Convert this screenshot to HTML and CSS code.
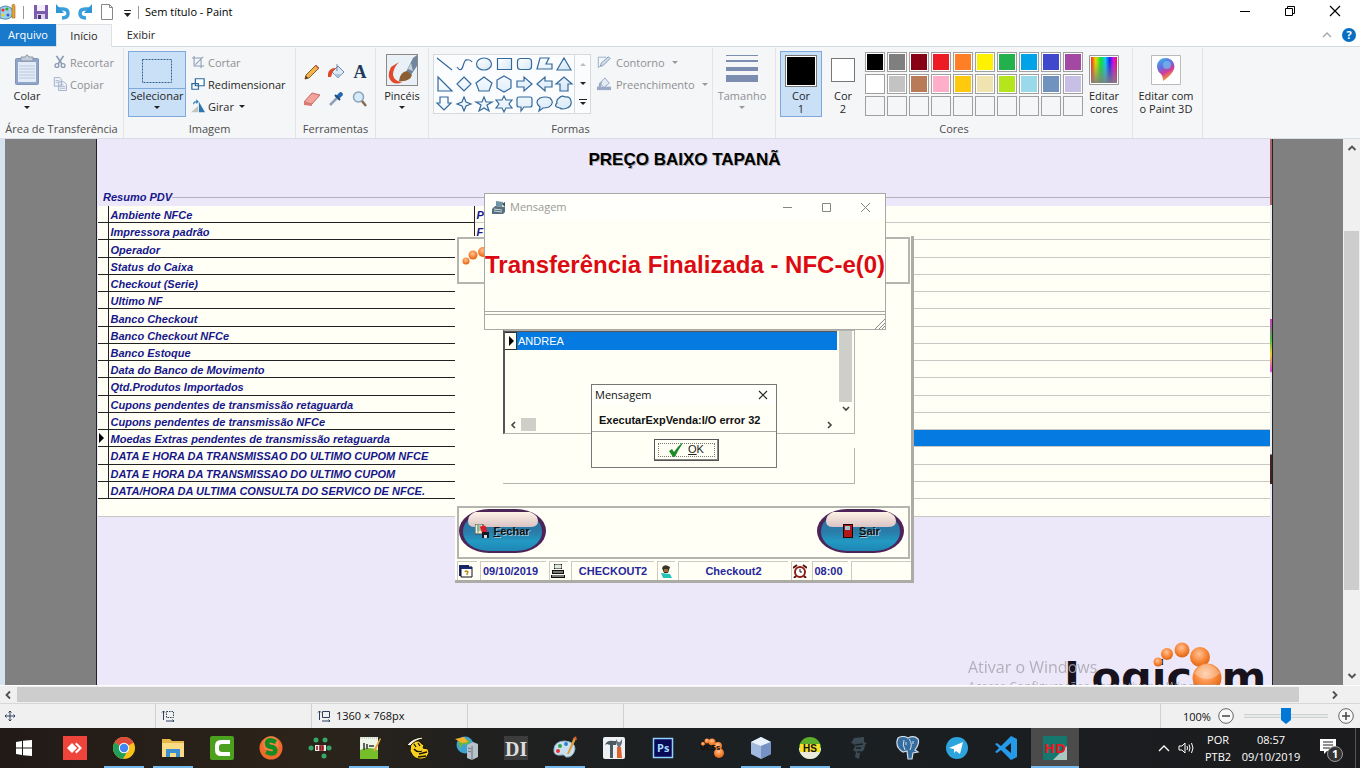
FILE: index.html
```html
<!DOCTYPE html>
<html lang="pt-BR">
<head>
<meta charset="utf-8">
<title>Sem título - Paint</title>
<link rel="stylesheet" href="styles.css">
</head>
<body>
<svg class="defs" aria-hidden="true">
  <defs>
    <radialGradient id="ball" cx=".45" cy=".35" r=".65"><stop offset="0" stop-color="#ffc49a"/><stop offset=".55" stop-color="#f98a3c"/><stop offset="1" stop-color="#dd6414"/></radialGradient>
    <linearGradient id="rainbow"><stop offset="0" stop-color="#f22"/><stop offset=".18" stop-color="#dd0"/><stop offset=".38" stop-color="#1d3"/><stop offset=".55" stop-color="#1ce"/><stop offset=".72" stop-color="#22e"/><stop offset=".88" stop-color="#d1d"/><stop offset="1" stop-color="#e14"/></linearGradient>
    <linearGradient id="fade" x2="0" y2="1"><stop offset=".2" stop-color="#808080" stop-opacity="0"/><stop offset="1" stop-color="#808080" stop-opacity=".9"/></linearGradient>
    <linearGradient id="pin" x2=".4" y2="1"><stop offset="0" stop-color="#37b7ea"/><stop offset=".45" stop-color="#6a6be0"/><stop offset=".7" stop-color="#d13a9a"/><stop offset="1" stop-color="#f8a02a"/></linearGradient>
    <linearGradient id="pill" x2="0" y2="1"><stop offset="0" stop-color="#2b6f9c"/><stop offset=".5" stop-color="#2a7ba8"/><stop offset=".75" stop-color="#2299c2"/><stop offset="1" stop-color="#1f86b5"/></linearGradient>
    <linearGradient id="gloss" x2="0" y2="1"><stop offset="0" stop-color="#fff2e6"/><stop offset="1" stop-color="#d9c3c4"/></linearGradient>
    <linearGradient id="shape" x2="1" y2="1"><stop offset="0" stop-color="#fff"/><stop offset="1" stop-color="#d5e8f8"/></linearGradient>
  </defs>
</svg>
<div class="app">
  <header class="titlebar">
    <svg class="logo" viewBox="0 0 17 18"><path d="M0 5q6-4 11 0 3 3 1 8-4 5-12 2z" fill="#9fd0ec" stroke="#4b8db5"/><circle cx="3" cy="7" r="1.6" fill="#e33"/><circle cx="7" cy="6" r="1.6" fill="#3a3"/><circle cx="3" cy="12" r="1.6" fill="#ec2"/><circle cx="8" cy="12" r="1.6" fill="#36c"/><path d="M12 15V2l2-1 1 2v12z" fill="#e9a13a" stroke="#a86a1c" stroke-width=".6"/></svg>
    <span class="bar"></span>
    <button class="quick" aria-label="Salvar"><svg viewBox="0 0 16 16"><path d="M1 1h14v14H1z" fill="#7d5bb0"/><path d="M4 1h8v6H4z" fill="#f2eefa"/><path d="M4 10h8v5H4z" fill="#d9d3e4"/><path d="M5 11h3v4H5z" fill="#4a3570"/></svg></button>
    <button class="quick" aria-label="Desfazer"><svg viewBox="0 0 16 16"><path d="M4 5h4q5 0 5 4.500T7 14" fill="none" stroke="#3aa0dd" stroke-width="3.500"/><path d="M1 0v9h8z" fill="#2f96d8"/></svg></button>
    <button class="quick" aria-label="Refazer"><svg viewBox="0 0 16 16"><path d="M12 5H8Q3 5 3 9.500T9 14" fill="none" stroke="#3aa0dd" stroke-width="3.500"/><path d="M15 0v9H7z" fill="#2f96d8"/></svg></button>
    <button class="quick" aria-label="Novo"><svg viewBox="0 0 16 16"><path d="M2.500.5h8l3 3v12h-11zM10.500.5v3h3" fill="#fff" stroke="#888"/></svg></button>
    <button class="quick" aria-label="Personalizar"><svg viewBox="0 0 16 16"><path d="M5 6h7v1H5zM5 9h7l-3.500 4z" fill="#222"/></svg></button>
    <span class="bar"></span>
    <h1 class="caption">Sem título - Paint</h1>
    <div class="winbtns">
      <button aria-label="Minimizar"><svg viewBox="0 0 12 12"><path d="M1 6.500h10" stroke="#000"/></svg></button>
      <button aria-label="Restaurar"><svg viewBox="0 0 12 12"><path d="M1.500 3.500h7v7h-7zM3.500 3.500v-2h7v7h-2" fill="none" stroke="#000"/></svg></button>
      <button aria-label="Fechar"><svg viewBox="0 0 12 12"><path d="M1 1l10 10M11 1L1 11" stroke="#000" stroke-width="1.200"/></svg></button>
    </div>
  </header>
  <nav class="tabs">
    <button class="tab file">Arquivo</button>
    <button class="tab current">Início</button>
    <button class="tab">Exibir</button>
    <div class="help">
      <svg width="10" height="8" viewBox="0 0 10 8"><path d="M1 6l4-4 4 4" fill="none" stroke="#aaa" stroke-width="1.500"/></svg>
      <button class="helpbtn" aria-label="Ajuda">?</button>
    </div>
  </nav>
  <section class="ribbon">
    <div class="group clip">
      <div class="body">
        <button class="big"><span class="pic"><svg width="26" height="32" viewBox="0 0 26 32"><rect x="1.500" y="4.500" width="23" height="26" rx="1" fill="#8fa6c8" stroke="#8295b4"/><path d="M4 8h18v20H4z" fill="#e3ebf6"/><path d="M5 12h16M5 15h16M5 18h16M5 21h16M5 24h16" stroke="#b9c9e0"/><path d="M7 3h4q2-4 4 0h4v4H7z" fill="#c3cbd6" stroke="#8b98aa"/></svg></span>Colar<i class="arrow"></i></button>
        <div class="rows">
          <button class="row off"><svg viewBox="0 0 16 16"><path d="M4 1l6 9M12 1L6 10" stroke="#8b9cb5" stroke-width="2"/><circle cx="4.500" cy="12" r="2.200" fill="none" stroke="#8b9cb5" stroke-width="1.500"/><circle cx="11.500" cy="12" r="2.200" fill="none" stroke="#8b9cb5" stroke-width="1.500"/></svg>Recortar</button>
          <button class="row off"><svg viewBox="0 0 16 16"><path d="M1.500.5h6l2 2v8h-8zM6.500 5.500h6l3 3v7h-9z" fill="#eef2f9" stroke="#98a8c3"/><path d="M3 4h4M3 6h3M8 9h4M8 11h6M8 13h6" stroke="#a8b6cc"/></svg>Copiar</button>
        </div>
      </div>
      <div class="label">Área de Transferência</div>
    </div>
    <div class="group image">
      <div class="body">
        <button class="big chosen"><span class="pic"><svg width="32" height="26" viewBox="0 0 32 26"><rect x="1.500" y="1.500" width="29" height="23" fill="none" stroke="#35638f" stroke-dasharray="2 1"/></svg></span>Selecionar<i class="arrow"></i></button>
        <div class="rows">
          <button class="row off"><svg viewBox="0 0 16 16"><path d="M3.500 1v11.500H15M1 3.500h10.500V15M5 11l9-9" fill="none" stroke="#8b9cb5" stroke-width="1.200"/></svg>Cortar</button>
          <button class="row"><svg viewBox="0 0 16 16"><path d="M5 2h10v8H5zM1 7.500h7.500V14H1z" fill="#fff" stroke="#2a6a9e" stroke-width="1.400"/></svg>Redimensionar</button>
          <button class="row"><svg viewBox="0 0 16 16"><path d="M0 15h8V8z" fill="#c2c8c0"/><path d="M9 15V3l7 12z" fill="#2c76ae"/><path d="M3 6q0-3 4-3M6 1l2 2-2 2" fill="none" stroke="#2d7fc1" stroke-width="1.300"/></svg>Girar<i class="arrow"></i></button>
        </div>
      </div>
      <div class="label">Imagem</div>
    </div>
    <div class="group toolset">
      <div class="tools">
        <button aria-label="Lápis"><svg viewBox="0 0 16 16"><path d="M1 15l1-4L12 1l3 3L5 14z" fill="#f1b44c" stroke="#8f5b22"/><path d="M11 2l3 3 1-1-3-3z" fill="#d46a5f"/><path d="M1 15l1-3 2 2z" fill="#333"/></svg></button>
        <button aria-label="Preencher com cor"><svg viewBox="0 0 16 16"><path d="M4 8l6-6 6 6-6 6z" fill="#dce8f3" stroke="#6b87a5"/><path d="M9 7V0" stroke="#6b87a5"/><path d="M0 13Q-1 4 8 4L5 7l-2 6z" fill="#dd4a25"/><path d="M6 10h8l-4 4z" fill="#a9c6df"/></svg></button>
        <button class="letter" aria-label="Texto">A</button>
        <button aria-label="Borracha"><svg viewBox="0 0 16 16"><path d="M0 11l8-9 8 2-8 9z" fill="#f3a29c" stroke="#c56962"/><path d="M0 11l8 2v2l-8-1z" fill="#d97a74"/></svg></button>
        <button aria-label="Selecionador de cores"><svg viewBox="0 0 16 16"><path d="M2 14l7-7" stroke="#8ea2b8" stroke-width="2.500"/><path d="M8 5l3 3 4-4q0-3-3-3z" fill="#2469ad"/><path d="M7 4l5 5" stroke="#174a80" stroke-width="2"/></svg></button>
        <button aria-label="Lupa"><svg viewBox="0 0 16 16"><circle cx="6.500" cy="6" r="5" fill="#d5ebfa" stroke="#8ba3ba" stroke-width="1.500"/><path d="M10 10l4 5" stroke="#8a6b50" stroke-width="2.500"/></svg></button>
      </div>
      <div class="label">Ferramentas</div>
    </div>
    <div class="group brushes">
      <div class="body">
        <button class="big"><span class="pic"><svg width="32" height="32" viewBox="0 0 32 32"><rect x=".5" y=".5" width="31" height="31" fill="#e9f0f6" stroke="#8a8a8a"/><path d="M13 8L5 13q-5 10 1 15 5 3 10 0-8-1-9-7 0-7 6-13z" fill="#e2492a"/><path d="M20 18L27 4l4-3v11l-6 9z" fill="#71869e"/><path d="M22 15l3-6 2 8z" fill="#c5d0da"/><path d="M13 27q1-9 8-10l5 4q-2 7-13 6z" fill="#8b5f33"/></svg></span>Pincéis<i class="arrow"></i></button>
      </div>
    </div>
    <div class="group shapes">
      <div class="body">
        <div class="gallery">
          <svg class="shapegrid" viewBox="0 0 140 58" fill="url(#shape)" stroke="#35699a" stroke-width="1.200">
            <path d="M3 3l15 12M23 12q4 6 6-1t4-6q3-1 5 2" fill="none"/><ellipse cx="50" cy="9" rx="7.500" ry="6"/><path d="M63.500 3.500h14v11h-14z"/><rect x="83.500" y="3.500" width="14" height="11" rx="3"/><path d="M106 3h9l-3 6h6v5h-15zM130 3l7 12h-14z"/>
            <path d="M4 22v14h14zM30 22l7 7-7 7-7-7zM50 22l8 6-3 8H45l-3-8zM70 21l7 4v8l-7 4-7-4v-8zM83 26h7v-4l8 7-8 7v-4h-7zM118 26h-7v-4l-8 7 8 7v-4h7zM126 36v-7h-4l8-7 8 7h-4v7z"/>
            <path d="M6 42v6H3l7 7 7-7h-3v-6zM30 42l2 5 5 2-5 2-2 5-2-5-5-2 5-2zM50 42l2 5h6l-5 3 2 6-5-3-5 3 2-6-5-3h6zM70 41l2 4h6l-3 4 3 4h-6l-2 4-2-4h-6l3-4-3-4h6zM85 42h11q2 0 2 2v6q0 2-2 2h-6l-3 4v-4h-2q-2 0-2-2v-6q0-2 2-2zM106 52q-6-5 0-9 5-2 10 0 5 5-1 9-3 1-6 1l-4 3zM125 43q3-3 6-1 5-1 6 4 1 5-4 7-5 2-7 0-7-1-3-5-1-3 2-5z"/>
          </svg>
          <div class="gallerynav"><i class="arrow up"></i><i class="arrow"></i><i class="arrow lined"></i></div>
        </div>
        <div class="rows">
          <button class="row off"><svg viewBox="0 0 16 16"><path d="M1.500 14.500v-12h9M1.500 14.500L14 3" fill="none" stroke="#8fa9c9"/><path d="M4 13l1-4 8-7 2 2-8 8z" fill="#cfdcec" stroke="#7893b8"/></svg>Contorno<i class="arrow"></i></button>
          <button class="row off"><svg viewBox="0 0 16 16"><path d="M0 11h16v4H0z" fill="#9aaac6"/><path d="M3 7l6-6 5 6-6 5z" fill="#e3eaf4" stroke="#8da0c0"/><path d="M2 12q-1-6 4-7l-2 7z" fill="#9aaac6"/></svg>Preenchimento<i class="arrow"></i></button>
        </div>
      </div>
      <div class="label">Formas</div>
    </div>
    <div class="group size">
      <div class="body">
        <button class="big off"><span class="pic"><svg width="32" height="32" viewBox="0 0 32 32" fill="#7d8db2"><path d="M0 1h32v1H0zM0 6h32v2H0zM0 13h32v4H0zM0 21h32v7H0z"/></svg></span>Tamanho<i class="arrow"></i></button>
      </div>
    </div>
    <div class="group colors">
      <div class="body">
        <button class="big pair chosen1"><span class="pic"><span class="sw black"></span></span>Cor<br>1</button>
        <button class="big pair"><span class="pic"><span class="sw white"></span></span>Cor<br>2</button>
        <div class="palette">
          <button style="background:#000" aria-label="Preto"></button><button style="background:#7f7f7f" aria-label="Cinza 50%"></button><button style="background:#880015" aria-label="Vermelho escuro"></button><button style="background:#ed1c24" aria-label="Vermelho"></button><button style="background:#ff7f27" aria-label="Laranja"></button><button style="background:#fff200" aria-label="Amarelo"></button><button style="background:#22b14c" aria-label="Verde"></button><button style="background:#00a2e8" aria-label="Turquesa"></button><button style="background:#3f48cc" aria-label="Índigo"></button><button style="background:#a349a4" aria-label="Roxo"></button>
          <button style="background:#fff" aria-label="Branco"></button><button style="background:#c3c3c3" aria-label="Cinza 25%"></button><button style="background:#b97a57" aria-label="Marrom"></button><button style="background:#ffaec9" aria-label="Rosa"></button><button style="background:#ffc90e" aria-label="Dourado"></button><button style="background:#efe4b0" aria-label="Amarelo claro"></button><button style="background:#b5e61d" aria-label="Lima"></button><button style="background:#99d9ea" aria-label="Turquesa claro"></button><button style="background:#7092be" aria-label="Azul acinzentado"></button><button style="background:#c8bfe7" aria-label="Lavanda"></button>
          <button class="empty" aria-label="Vazio 1"></button><button class="empty" aria-label="Vazio 2"></button><button class="empty" aria-label="Vazio 3"></button><button class="empty" aria-label="Vazio 4"></button><button class="empty" aria-label="Vazio 5"></button><button class="empty" aria-label="Vazio 6"></button><button class="empty" aria-label="Vazio 7"></button><button class="empty" aria-label="Vazio 8"></button><button class="empty" aria-label="Vazio 9"></button><button class="empty" aria-label="Vazio 10"></button>
        </div>
        <button class="big edit"><span class="pic"><svg width="30" height="30" viewBox="0 0 30 30"><path d="M.5.5h29v29H.5z" fill="#fff" stroke="#999"/><path d="M2 2h26v26H2z" fill="url(#rainbow)"/><path d="M2 2h26v26H2z" fill="url(#fade)"/></svg></span>Editar<br>cores</button>
      </div>
      <div class="label">Cores</div>
    </div>
    <div class="group p3d">
      <div class="body">
        <button class="big"><span class="pic"><svg width="30" height="30" viewBox="0 0 30 30"><path d="M.5.5h29v29H.5z" fill="#fff" stroke="#bbb"/><path d="M15 3a8.500 8.500 0 0 1 8 11q-2 6-11 12 0-5-2-7-4-3-4-8 1-8 9-8z" fill="url(#pin)"/><circle cx="16" cy="10" r="4" fill="#6fd0f2" opacity=".6"/></svg></span>Editar com<br>o Paint 3D</button>
      </div>
    </div>
  </section>

  <main class="work">
    <div class="stage">
      <div class="canvas">
        <h2 class="store">PREÇO BAIXO TAPANÃ</h2>
        <section class="summary">
          <h3 class="legend"><span>Resumo PDV</span></h3>
          <div class="sheet">
          <table class="grid">
            <tr><td></td><td>Ambiente NFCe</td><td>P</td></tr>
            <tr><td></td><td>Impressora padrão</td><td>F</td></tr>
            <tr><td></td><td>Operador</td><td></td></tr>
            <tr><td></td><td>Status do Caixa</td><td></td></tr>
            <tr><td></td><td>Checkout (Serie)</td><td></td></tr>
            <tr><td></td><td>Ultimo NF</td><td></td></tr>
            <tr><td></td><td>Banco Checkout</td><td></td></tr>
            <tr><td></td><td>Banco Checkout NFCe</td><td></td></tr>
            <tr><td></td><td>Banco Estoque</td><td></td></tr>
            <tr><td></td><td>Data do Banco de Movimento</td><td></td></tr>
            <tr><td></td><td>Qtd.Produtos Importados</td><td></td></tr>
            <tr><td></td><td>Cupons pendentes de transmissão retaguarda</td><td></td></tr>
            <tr><td></td><td>Cupons pendentes de transmissão NFCe</td><td></td></tr>
            <tr class="active"><td><i class="mark"></i></td><td>Moedas Extras pendentes de transmissão retaguarda</td><td></td></tr>
            <tr><td></td><td>DATA E HORA DA TRANSMISSAO DO ULTIMO CUPOM NFCE</td><td></td></tr>
            <tr><td></td><td>DATA E HORA DA TRANSMISSAO DO ULTIMO CUPOM</td><td></td></tr>
            <tr><td></td><td>DATA/HORA DA ULTIMA CONSULTA DO SERVICO DE NFCE.</td><td></td></tr>
          </table>
          </div>
        </section>
        <div class="speckle"></div>

        <svg class="brand" viewBox="0 0 210 50"><text x="0" y="49">Logic<tspan fill="none">o</tspan>m</text><g fill="url(#ball)"><circle cx="94" cy="19" r="4.500"/><circle cx="103" cy="11" r="6"/><circle cx="118" cy="7" r="7.500"/><circle cx="136" cy="14" r="10"/><circle cx="143" cy="35" r="14.500"/></g><path d="M130 30q13-18 26 0-6 6-13 6t-13-6z" fill="#fff" opacity=".3"/></svg>
        <div class="activate"><p>Ativar o Windows</p><p class="small">Acesse Configurações para ativar o Windows.</p></div>

        <section class="form">
          <div class="panel top"><svg width="30" height="30" viewBox="0 0 30 30" fill="url(#ball)"><circle cx="7" cy="22" r="3.500"/><circle cx="14" cy="16" r="4.500"/><circle cx="24" cy="13" r="5"/></svg></div>
          <div class="middle">
            <div class="list">
              <div class="items"><div class="item"><span class="cell"><i class="mark"></i></span><span class="name">ANDREA</span></div></div>
              <div class="vs"><span></span><svg width="8" height="6" viewBox="0 0 8 6"><path d="M1 1l3 3 3-3" fill="none" stroke="#444" stroke-width="1.600"/></svg></div>
              <div class="hs"><svg width="6" height="8" viewBox="0 0 6 8"><path d="M5 1L2 4l3 3" fill="none" stroke="#444" stroke-width="1.600"/></svg><span></span><svg class="end" width="6" height="8" viewBox="0 0 6 8"><path d="M1 1l3 3-3 3" fill="none" stroke="#444" stroke-width="1.600"/></svg></div>
            </div>
            <div class="well"></div>
          </div>
          <div class="panel actions">
            <button class="pill"><svg class="pillbg" viewBox="0 0 87 44"><rect width="87" height="44" rx="30" ry="22" fill="#4c2458"/><rect x="4" y="3" width="79" height="39" rx="26" ry="19" fill="url(#pill)"/><path d="M16 3h55q8 3 8 9 0 6-8 6H16q-7 0-7-6 0-6 7-9z" fill="url(#gloss)"/></svg><svg class="ico" viewBox="0 0 14 14"><path d="M0 0h8v10H0z" fill="#f4efd8" stroke="#444"/><path d="M2 2h4M2 4h4M2 6h4M3 1v8" stroke="#697"/><path d="M5 3q6-4 7 3v3H7z" fill="#d21f2c"/><path d="M7 8h7v6H7z" fill="#151525"/><path d="M9 11h3v3H9z" fill="#ddd"/></svg><span><u>F</u>echar</span></button>
            <button class="pill"><svg class="pillbg" viewBox="0 0 87 44"><rect width="87" height="44" rx="30" ry="22" fill="#4c2458"/><rect x="4" y="3" width="79" height="39" rx="26" ry="19" fill="url(#pill)"/><path d="M16 3h55q8 3 8 9 0 6-8 6H16q-7 0-7-6 0-6 7-9z" fill="url(#gloss)"/></svg><svg class="ico" viewBox="0 0 14 14"><path d="M2 0h10v14H2z" fill="#200"/><path d="M3 1h8v12H3z" fill="#b01818"/><path d="M4 2h5v4H4z" fill="#9fc3d8"/></svg><span><u>S</u>air</span></button>
          </div>
          <div class="formbar">
            <span class="c1"><svg width="14" height="14" viewBox="0 0 14 14"><path d="M0 1h10v11H0z" fill="#1b2a7c"/><path d="M2 3h11v10H2z" fill="#fff" stroke="#111"/><path d="M2 3h11v2H2z" fill="#1b2a7c"/><path d="M6 8q1-2 3 0l-1 2v1" fill="none" stroke="#b80" stroke-width="1.400"/></svg></span>
            <span class="c2">09/10/2019</span>
            <span class="c3"><svg width="14" height="14" viewBox="0 0 14 14"><path d="M3 0h8v5H3zM1 6h12v4H1zM0 11h14v3H0z" fill="#111"/><path d="M4 1h6v3H4zM2 8h10M1 12h12" fill="#dfe8dd" stroke="#dfe8dd"/></svg></span>
            <span class="c4">CHECKOUT2</span>
            <span class="c5"><svg width="14" height="14" viewBox="0 0 14 14"><path d="M3 4q2-5 8-1l-2 6H5z" fill="#3a3320"/><path d="M5 5h4v3H5z" fill="#9a6a3c"/><path d="M2 9l9 1 2 4H4z" fill="#23c3b8"/></svg></span>
            <span class="c6">Checkout2</span>
            <span class="c7"><svg width="14" height="14" viewBox="0 0 14 14"><circle cx="7" cy="8" r="5" fill="#fff" stroke="#8c1d18" stroke-width="2"/><path d="M0 4l4-3M14 4l-4-3M3 12l-2 2M11 12l2 2" stroke="#5b120f" stroke-width="2"/><path d="M7 5v3h2" fill="none" stroke="#111"/></svg></span>
            <span class="c8">08:00</span>
            <span class="c9"></span>
          </div>
        </section>

        <section class="dialog transfer">
          <header><svg width="15" height="14" viewBox="0 0 15 14"><path d="M1 9l3-3 10 1v5l-2 2H1z" fill="#58707c"/><path d="M5 1l7 1-1 5-6-1z" fill="#6f94a3"/><path d="M3 9l8 1M3 11l8 1" stroke="#c5d8df"/><path d="M11 4l3-2v5z" fill="#37505c"/></svg><span>Mensagem</span>
            <svg class="ctl" width="90" height="10" viewBox="0 0 90 10"><path d="M0 5.500h9M39.500 1.500h8v8h-8zM78 1l9 9M87 1l-9 9" fill="none" stroke="#858585"/></svg></header>
          <p class="notice">Transferência Finalizada - NFC-e(0)</p>
          <footer><svg width="10" height="10" viewBox="0 0 10 10"><path d="M0 10L10 0M4 10l6-6M7 10l3-3" stroke="#8a8a8a"/></svg></footer>
        </section>

        <section class="dialog error">
          <header><span>Mensagem</span><button aria-label="Fechar mensagem"><svg width="10" height="10" viewBox="0 0 10 10"><path d="M1 1l8 8M9 1L1 9" stroke="#222" stroke-width="1.100"/></svg></button></header>
          <p class="why">ExecutarExpVenda:I/O error 32</p>
          <footer><button class="ok"><svg width="16" height="14" viewBox="0 0 16 14"><path d="M1 8l3-2 2 3Q9 4 14 0h1Q10 7 7 14H5z" fill="#1d8a2b"/></svg><span><u>O</u>K</span></button></footer>
        </section>
      </div>
    </div>
    <div class="vscroll"><svg viewBox="0 0 10 8"><path d="M1.500 6L5 2.500 8.500 6" fill="none" stroke="#505050" stroke-width="1.800"/></svg><div class="track"><span></span></div><svg viewBox="0 0 10 8"><path d="M1.500 2L5 5.500 8.500 2" fill="none" stroke="#505050" stroke-width="1.800"/></svg></div>
  </main>
  <div class="hscroll"><svg viewBox="0 0 8 10"><path d="M6 1.500L2.500 5 6 8.500" fill="none" stroke="#505050" stroke-width="1.800"/></svg><span></span><svg viewBox="0 0 8 10"><path d="M2 1.500L5.500 5 2 8.500" fill="none" stroke="#505050" stroke-width="1.800"/></svg></div>
  <footer class="status">
    <div class="slot"><svg width="12" height="12" viewBox="0 0 12 12"><path d="M6 1v10M1 6h10M4.500 2.500L6 1l1.500 1.500M4.500 9.500L6 11l1.500-1.500M2.500 4.500L1 6l1.500 1.500M9.500 4.500L11 6 9.500 7.500" fill="none" stroke="#2c405c"/></svg></div>
    <div class="slot"><svg width="14" height="12" viewBox="0 0 14 12"><path d="M2.500 1v9M1 2.500L2.500 1 4 2.500M5 11h8M11.500 9.500L13 11l-1.500 1" fill="none" stroke="#2c405c"/><rect x="5.500" y="1.500" width="7" height="6" fill="none" stroke="#2c405c" stroke-dasharray="1.500 1"/></svg></div>
    <div class="slot"><svg width="14" height="12" viewBox="0 0 14 12"><path d="M2.500 1v9M1 2.500L2.500 1 4 2.500M5 11h8M11.500 9.500L13 11l-1.500 1M5.500 1.500h7v6h-7z" fill="none" stroke="#2c405c"/></svg>1360 × 768px</div>
    <div class="slot"></div>
    <div class="zoom"><label for="zoom">100%</label><button aria-label="Menos zoom"><svg viewBox="0 0 16 16"><circle cx="8" cy="8" r="7.300" fill="#f8f8f8" stroke="#666"/><path d="M4 8h8" stroke="#444" stroke-width="1.500"/></svg></button><input id="zoom" type="range" min="0" max="100" value="50"><button aria-label="Mais zoom"><svg viewBox="0 0 16 16"><circle cx="8" cy="8" r="7.300" fill="#f8f8f8" stroke="#666"/><path d="M4 8h8M8 4v8" stroke="#444" stroke-width="1.500"/></svg></button></div>
  </footer>

  <nav class="taskbar">
    <button class="start" aria-label="Iniciar"><svg viewBox="0 0 24 24"><path d="M4 6l6-1v6.500H4zM11 4.800L20 4v7.500h-9zM4 12.500h6V19l-6-1zM11 12.500h9V20l-9-.8z" fill="#fff"/></svg></button>
    <button aria-label="AnyDesk"><svg viewBox="0 0 24 24"><path d="M0 0h24v24H0z" fill="#ef443b"/><path d="M4 12l5-5 5 5-5 5zM12 8l1.500-1.500L19 12l-5.500 5.500L12 16l4-4z" fill="#fff"/></svg></button>
    <button class="run" aria-label="Chrome"><svg viewBox="0 0 24 24"><circle cx="12" cy="12" r="11" fill="#fbc116"/><path d="M12 12L2.500 6.500a11 11 0 0 1 19 0z" fill="#dd4b3e"/><path d="M12 12L2.500 6.500A11 11 0 0 0 11 23l5-9z" fill="#229e58"/><circle cx="12" cy="12" r="5.200" fill="#fff"/><circle cx="12" cy="12" r="4.200" fill="#4285f4"/></svg></button>
    <button class="run" aria-label="Explorador"><svg viewBox="0 0 24 24"><path d="M1 3h8l2 2h12v16H1z" fill="#e9b64a"/><path d="M1 7h22v14H1z" fill="#fbdc86"/><path d="M5 13h14v8h-4v-4H9v4H5z" fill="#3d8fd0"/></svg></button>
    <button aria-label="Camtasia"><svg viewBox="0 0 24 24"><rect width="24" height="24" rx="2" fill="#4ba01d"/><path d="M20 4h-9q-6 0-6 6v4q0 6 6 6h9v-4h-8q-3 0-3-3v-2q0-3 3-3h8z" fill="#fff"/></svg></button>
    <button aria-label="Scriptcase"><svg viewBox="0 0 24 24"><circle cx="12" cy="12" r="11.500" fill="#f06a2c"/><circle cx="12" cy="8" r="8" fill="#f98f55" opacity=".6"/><path d="M17 6q-8-4-9 1 0 4 5 4 4 1 3 5-2 3-9 0" fill="none" stroke="#128c22" stroke-width="4.500"/></svg></button>
    <button aria-label="Conexão IBExpert"><svg viewBox="0 0 24 24"><g fill="#35a867"><circle cx="8" cy="4" r="2.500"/><circle cx="17" cy="4" r="2.500"/><circle cx="3" cy="12" r="2.500"/><circle cx="21" cy="12" r="2.500"/><circle cx="16" cy="20" r="2.500"/></g><path d="M7 9h11v6H7z" fill="#eee"/><path d="M9 10v4M12 10v4h3v-4h-3v2h3" fill="none" stroke="#811" stroke-width="1.500"/></svg></button>
    <button class="run" aria-label="Notepad++"><svg viewBox="0 0 24 24"><path d="M3 1h18v22H3z" fill="#edf5e6"/><path d="M3 14q9-4 18 0v9H3z" fill="#76bd2a"/><path d="M7 7v7M10 8v5M12 10h5" stroke="#333" stroke-width="1.500"/><path d="M23 2l-6 11-1 3 3-2 5-11z" fill="#e4a03a"/><path d="M3 2h18" stroke="#aaa" stroke-dasharray="1 1"/></svg></button>
    <button aria-label="Dbeaver"><svg viewBox="0 0 24 24"><path d="M5 7q4-3 8-2 2 3 5 4l-1 3 5 1 1 4-3 5q-8 3-13-2L4 15z" fill="#f8d024" stroke="#191500"/><path d="M1 9Q6 2 16 1l1 2Q9 4 4 10z" fill="#f4f0e0" stroke="#191500"/><path d="M8 8l2 3M12 7l2 3M8 13q3 4 8 2M13 18l8-2M12 21l8-1" fill="none" stroke="#191500" stroke-width="1.300"/></svg></button>
    <button aria-label="Servidor"><svg viewBox="0 0 24 24"><circle cx="10" cy="9" r="8.500" fill="#3da2d3"/><path d="M3 5q6-5 12 0-2 5-7 3l-3 5z" fill="#68b83f"/><path d="M0 3l9-2 4 5-6 1z" fill="#f3b32d"/><path d="M12 9l6-3 5 2v13l-6 3-5-2z" fill="#b9c1c8"/><path d="M17 10v14M13 12l3 1M13 15l3 1" stroke="#66727c"/></svg></button>
    <button aria-label="DI"><svg viewBox="0 0 24 24"><path d="M0 0h24v24H0z" fill="#3c3c3c"/><text x="1" y="20" class="di">DI</text></svg></button>
    <button class="run" aria-label="Paint"><svg viewBox="0 0 24 24"><path d="M1 13Q2 5 12 5q10 1 10 8-2 9-9 8-2-3-5-2-8 1-7-6z" fill="#c9e1ef" stroke="#8db2c8"/><circle cx="7" cy="10" r="2" fill="#35a04c"/><circle cx="13" cy="8" r="2" fill="#347fd0"/><circle cx="5" cy="15" r="2" fill="#d33"/><path d="M14 18l7-17 2 2-7 15z" fill="#e09b3c"/><path d="M20 3l3-3 1 4z" fill="#dc5d35"/></svg></button>
    <button aria-label="Ferramentas do sistema"><svg viewBox="0 0 24 24"><rect x="1" y="1" width="22" height="22" rx="2" fill="#edf1f4"/><path d="M3 9q2-5 8-4h3v4h-3v13H8V9L5 8z" fill="#4b5963"/><path d="M15 11h4l1 11h-5z" fill="#dc632c"/><path d="M14 3v4l2 4h2l2-4V3l-2 3h-2z" fill="#68747d"/></svg></button>
    <button aria-label="Photoshop"><svg viewBox="0 0 24 24"><path d="M2.500 2.500h19v19h-19z" fill="#080a55" stroke="#8ed0ff" stroke-width="1.500"/><text x="6" y="16" class="ps">Ps</text></svg></button>
    <button aria-label="UCS"><svg viewBox="0 0 24 24"><g fill="url(#ball)"><circle cx="3" cy="8" r="2"/><circle cx="7" cy="5" r="2.500"/><circle cx="12" cy="6" r="3.500"/><circle cx="18" cy="10" r="4"/><circle cx="19" cy="17" r="5"/></g><text x="0" y="14" class="ucs">UCSs</text></svg></button>
    <button class="run" aria-label="VirtualBox"><svg viewBox="0 0 24 24"><path d="M12 1l10 5v12l-10 5-10-5V6z" fill="#a2b9df"/><path d="M12 1l10 5-10 4L2 6z" fill="#e8f1fc"/><path d="M22 6v12l-10 5V10z" fill="#7692c4"/></svg></button>
    <button class="run" aria-label="HeidiSQL"><svg viewBox="0 0 24 24"><circle cx="12" cy="12" r="11" fill="#5cae2c"/><path d="M1 12h22a11 11 0 0 1-22 0z" fill="#eceadf"/><path d="M2 8h20v8H2z" fill="#f4df29"/><text x="5" y="16" class="hs-text">HS</text></svg></button>
    <button aria-label="Detetive"><svg viewBox="0 0 24 24"><path d="M7 2l10-1v5l3 1-2 2-1 5-4 3-1 6-4-2 1-5-3-2 2-3-1-3-3-1z" fill="#3c4a54"/><path d="M8 9l8-1M9 12h5M10 16h4" stroke="#1a2227" stroke-width="1.500"/></svg></button>
    <button aria-label="PostgreSQL"><svg viewBox="0 0 24 24"><path d="M2 2q5-3 10 0 6-3 10 1 2 4-3 11l3 2-5 1-1 6h-4l-1-8-4 1Q0 12 1 5z" fill="#376c9e" stroke="#d2e0ed" stroke-width="1.200"/><path d="M8 4q-2 5 1 10M13 3q4 5 1 11M10 6v3M17 5v3" fill="none" stroke="#d2e0ed"/></svg></button>
    <button aria-label="Telegram"><svg viewBox="0 0 24 24"><circle cx="12" cy="12" r="11" fill="#2ca5dd"/><path d="M4 12l14-6-3 12-4-3-2 2v-4z" fill="#fff"/></svg></button>
    <button aria-label="VS Code"><svg viewBox="0 0 24 24"><path d="M17 0l6 3v18l-6 3L7 14l-4 3-2-1 4-4-4-4 2-1 4 3zM17 7l-6 5 6 5z" fill="#249ae8" fill-rule="evenodd"/></svg></button>
    <button class="run front" aria-label="HD"><svg viewBox="0 0 24 24"><path d="M0 0h24v24H0z" fill="#16776f"/><path d="M24 10v14H10z" fill="#a9c8bf"/><text x="1" y="17" class="hd">HD</text></svg></button>
    <div class="tray">
      <svg width="12" height="8" viewBox="0 0 12 8"><path d="M1 7l5-5 5 5" fill="none" stroke="#fff" stroke-width="1.300"/></svg>
      <svg width="18" height="14" viewBox="0 0 18 14"><path d="M1 5h3l3-3v10L4 9H1zM9 5q1 2 0 4M11 3.500q2 3.500 0 7M13.500 2q3 5 0 10" fill="none" stroke="#fff"/></svg>
      <div class="two lang">POR<br>PTB2</div>
      <div class="two clock">08:57<br>09/10/2019</div>
      <button class="notes" aria-label="Notificações"><svg width="26" height="26" viewBox="0 0 26 26"><path d="M1 2h16v12H8l-3 3v-3H1z" fill="#fff"/><path d="M4 5h10M4 8h10M4 11h7" stroke="#222"/><circle cx="16" cy="17" r="7.500" fill="#333" stroke="#999"/><text x="13" y="21" class="count">1</text></svg></button>
    </div>
  </nav>
</div>
</body>
</html>
```
FILE: styles.css
```css
* { box-sizing: border-box; }
body { margin: 0; font: 11px/13px "Open Sans", "Noto Sans", sans-serif; color: #262626; background: #fff; }
button { font: inherit; color: inherit; background: none; border: 0; padding: 0; }
svg { flex: none; }
h1, h2, h3, p { margin: 0; font-size: inherit; font-weight: normal; }
.defs { display: block; width: 0; height: 0; }
.app { display: flex; flex-direction: column; height: 100vh; overflow: hidden; }

/* Title bar and tabs */
.titlebar { display: flex; align-items: center; height: 24px; flex: none; }
.logo { width: 17px; height: 18px; }
.bar { width: 1px; height: 13px; background: #999; margin: 0 6px; }
.quick { width: 22px; height: 20px; display: grid; place-items: center; }
.quick svg { width: 16px; height: 16px; }
.titlebar .quick:last-of-type { width: 18px; }
.titlebar .quick + .bar { margin: 0 6px 0 2px; }
.caption { color: #000; padding-bottom: 1px; }
.winbtns { display: flex; margin: 0 3px 0 auto; padding-bottom: 2px; }
.winbtns button { width: 45px; height: 22px; display: grid; place-items: center; }
.winbtns svg { width: 12px; height: 12px; }
.tabs { display: flex; height: 23px; flex: none; border-bottom: 1px solid #d5dae0; }
.tab { width: 56px; height: 23px; padding-bottom: 2px; }
.tab.file { background: #1979ca; color: #fff; height: 22px; }
.tab.current { background: #f5f6f7; border: 1px solid #dde1e6; border-bottom: 0; }
.tabs .tab:nth-child(3) { width: 58px; }
.help { margin-left: auto; display: flex; align-items: center; gap: 10px; padding-right: 4px; }
.helpbtn { width: 14px; height: 14px; border-radius: 50%; background: #0a6fc2; color: #fff; font-weight: bold; line-height: 14px; text-align: center; }

/* Ribbon */
.ribbon { display: flex; height: 92px; flex: none; padding-top: 1px; background: #f5f6f7; border-bottom: 1px solid #dadbe8; }
.group { display: flex; flex-direction: column; padding: 3px 4px 1px; border-right: 1px solid #e2e3e4; }
.body { display: flex; height: 66px; }
.label { margin-top: auto; line-height: 16px; text-align: center; color: #4d4d4d; white-space: nowrap; }
.big { display: flex; flex-direction: column; align-items: center; width: 46px; height: 66px; white-space: nowrap; }
.pic { height: 38px; display: flex; align-items: center; }
.arrow { width: 0; height: 0; border: 3px solid transparent; border-top-color: #222; border-bottom-width: 0; margin-top: 4px; }
.rows { display: flex; flex-direction: column; }
.row { display: flex; align-items: center; height: 22px; gap: 2px; white-space: nowrap; }
.row svg { width: 14px; height: 14px; }
.row .arrow { margin: 0 0 0 2px; }
.off { color: #8d9095; }
.off .arrow { border-top-color: #999; }
.clip { width: 124px; }
.clip .rows { padding-left: 3px; }
.image { width: 172px; }
.image .rows { padding-left: 5px; }
.image .row, .clip .row { gap: 3px; }
.chosen { width: 58px; background: linear-gradient(#c9e0f7 36px, #7fa9dd 36px, #7fa9dd 37px, #c9e0f7 37px); border: 1px solid #7fa9dd; }
.chosen .pic { height: 37px; }
.toolset { width: 80px; }
.tools { display: grid; grid-template-columns: repeat(3, 24px); grid-auto-rows: 27px; padding-top: 7px; }
.tools button { display: grid; place-items: center; }
.tools svg { width: 16px; height: 16px; }
.tools .letter { font: bold 18px/20px "Liberation Serif", serif; color: #1f3a5c; }
.brushes { width: 53px; }
.shapes { width: 284px; }
.shapes .rows { padding-left: 6px; }
.shapes .row { gap: 5px; }
.gallery { display: flex; width: 158px; height: 60px; margin: 3px 0; background: #fafcfe; border: 1px solid #d5dade; }
.shapegrid { width: 140px; height: 58px; }
.gallerynav { flex: 1; display: flex; flex-direction: column; justify-content: space-around; align-items: center; border-left: 1px solid #d5dade; }
.gallerynav .arrow { margin: 0; }
.gallerynav .up { transform: rotate(180deg); border-top-color: #bbb; }
.lined { position: relative; }
.lined::before { content: ""; position: absolute; left: -4px; top: -6px; width: 8px; height: 1px; background: #222; }
.size { width: 63px; }
.size .big { width: 50px; }
.colors { width: 357px; }
.pair { width: 42px; }
.chosen1 { background: #c9e0f7; border: 1px solid #7fa9dd; }
.chosen1 .pic { height: 37px; }
.sw { border: 1px solid #777; }
.sw.black { width: 32px; height: 32px; background: #000; box-shadow: inset 0 0 0 1px #fff; }
.sw.white { width: 24px; height: 24px; background: #fff; }
.palette { display: grid; grid-template-columns: repeat(10, 20px); grid-auto-rows: 20px; gap: 2px; padding: 1px 1px 0 1px; }
.palette button { border: 1px solid #a0a0a0; box-shadow: inset 0 0 0 1px #fff; }
.palette .empty { box-shadow: none; }
.edit { width: 40px; }
.p3d { width: 70px; padding-left: 2px; }
.p3d .big { width: 62px; }

/* Workspace */
.work { display: flex; flex: 1; min-height: 0; }
.stage { display: flex; flex: 1; min-width: 0; background: #808080; border-left: 5px solid #d5e3f0; padding: 0 70px 0 91px; }
.canvas { position: relative; flex: 1; overflow: hidden; background: #ece8f9; border: solid #222; border-width: 0 1px; font-family: "Liberation Sans", Arial, sans-serif; }
.store { text-align: center; font-size: 17px; line-height: 22px; font-weight: bold; color: #000; padding: 10px 0 17px; text-shadow: 1px 1px #aaa; }
.legend { display: flex; align-items: center; color: #17178a; font: italic bold 11px/18px "Liberation Sans", Arial, sans-serif; padding-left: 6px; }
.legend::after { content: ""; flex: 1; height: 1px; background: #b4b1bd; }
.sheet { background: #fffff6; height: 311px; margin: 0 2px 0 1px; border-bottom: 1px solid #c8c8c4; }
.grid { width: 100%; height: 293px; border-collapse: collapse; table-layout: fixed; font: italic bold 11px/14px "Liberation Sans", Arial, sans-serif; color: #17178a; }
.grid td { padding: 2px 2px 0; border-bottom: 1px solid #222; white-space: nowrap; }
.grid td:first-child { width: 10px; border-right: 1px solid #222; padding: 0 1px; }
.grid td:nth-child(2) { width: 366px; border-right: 1px solid #222; }
.grid td:last-child { border-bottom-color: #c8c8c4; }
.grid .active td:last-child { background: #057ae0; }
.mark { display: block; width: 0; height: 0; border: 5px solid transparent; border-left-color: #000; border-right-width: 0; }
.speckle { position: absolute; right: 0; top: 0; width: 2px; height: 345px; background: linear-gradient(#a66 66px, #eee 66px, #eee 180px, #d3c 180px, #4b4 200px, #ec3 215px, #d4d 232px, #eee 234px, #eee 315px, #422 316px); }
.brand { position: absolute; left: 967px; top: 504px; width: 210px; height: 50px; overflow: visible; }
.brand text { font: bold 43px "DejaVu Sans", sans-serif; fill: #17121c; }
.activate { position: absolute; left: 871px; top: 517px; color: #a9a5b2; font: 16px/22px "Open Sans", sans-serif; opacity: .85; white-space: nowrap; }
.activate .small { font-size: 12px; line-height: 18px; }

/* Checkout form */
.form { position: absolute; left: 358px; top: 97px; width: 459px; height: 347px; display: flex; flex-direction: column; padding: 1px 0 0 2px; background: #fffff6; border: solid #acaca6; border-width: 0 3px 3px 0; }
.panel { border: 2px solid #b5b5af; margin-right: 1px; }
.panel.top { height: 47px; }
.middle { flex: 1; padding: 46px 0 0 46px; }
.list { display: grid; grid-template: 1fr 17px / 1fr 17px; width: 352px; height: 104px; border: 1px solid #b5b5af; border-left: 2px solid #555; }
.items { border-top: 1px solid #555; }
.item { display: flex; height: 18px; background: #057ae0; color: #fff; font-size: 11px; line-height: 19px; }
.cell { width: 12px; background: #fffff6; border: 1px solid #333; border-left: 0; padding: 3px 4px; }
.name { padding-left: 1px; }
.vs { display: flex; flex-direction: column; align-items: center; gap: 4px; padding-bottom: 4px; }
.vs span { flex: 1; width: 13px; background: #cfcfca; }
.hs { display: flex; align-items: center; gap: 5px; padding: 0 4px 0 5px; }
.hs span { width: 15px; height: 13px; background: #cfcfca; }
.hs .end { margin-left: auto; }
.well { width: 352px; height: 36px; margin-top: 14px; border: solid #b5b5af; border-width: 0 1px 1px 0; }
.panel.actions { display: flex; justify-content: space-between; height: 53px; padding: 1px 4px 0 0; }
.pill { position: relative; width: 87px; height: 44px; display: flex; align-items: center; justify-content: center; gap: 4px; font: bold 11px/14px "Liberation Sans", Arial, sans-serif; color: #111; text-shadow: 1px 1px #9fc3d4; }
.pillbg { position: absolute; inset: 0; width: 87px; height: 44px; }
.pill span, .ico { position: relative; }
.ico { width: 14px; height: 14px; }
.formbar { display: flex; height: 21px; gap: 3px; padding-top: 2px; font: bold 11px/18px "Liberation Sans", Arial, sans-serif; color: #26269c; text-align: center; }
.formbar span { flex: none; border: solid #cbcbc4; border-width: 1px 0 0 1px; }
.formbar svg { display: block; margin: 2px 0 0 1px; }
.c1 { width: 20px; } .formbar .c2 { width: 66px; padding-right: 6px; } .c3 { width: 19px; } .c4 { width: 83px; } .c5 { width: 18px; }
.c6 { width: 110px; } .c7 { width: 18px; } .formbar .c8 { width: 36px; padding-right: 4px; } .formbar .c9 { flex: 1; }

/* Message windows */
.dialog { position: absolute; background: #fffff6; display: flex; flex-direction: column; border: 1px solid #a8a8a4; }
.dialog header { display: flex; align-items: center; font: 11px/16px "Open Sans", sans-serif; background: #fffffb; }
.transfer { left: 387px; top: 54px; width: 402px; height: 137px; }
.transfer header { height: 25px; padding: 0 12px 0 6px; gap: 4px; color: #999; }
.transfer .ctl { margin-left: auto; }
.notice { flex: 1; display: grid; place-items: center; font-size: 24px; line-height: 28px; font-weight: bold; color: #dc0a12; white-space: nowrap; border-bottom: 1px solid #a8a8a4; }
.transfer footer { height: 15px; margin-top: 2px; border-top: 1px solid #a8a8a4; display: flex; justify-content: flex-end; align-items: flex-end; }
.error { left: 494px; top: 245px; width: 186px; height: 84px; border-color: #777; }
.error header { height: 20px; justify-content: space-between; padding: 0 8px 0 3px; color: #111; }
.error header button { height: 10px; }
.error header button svg { display: block; }
.why { height: 27px; padding-left: 7px; font-size: 11px; line-height: 31px; font-weight: bold; color: #111; border-bottom: 1px solid #a8a8a4; white-space: nowrap; }
.error footer { flex: 1; display: grid; place-items: center; padding-left: 4px; }
.ok { width: 65px; height: 22px; display: flex; align-items: center; justify-content: center; gap: 4px; font-size: 11px; color: #222; border: 1px solid #555; box-shadow: inset -1px -1px #888; outline: 1px dotted #777; outline-offset: -5px; }

/* Scroll bars */
.vscroll { width: 17px; background: #f0f0f0; display: flex; flex-direction: column; align-items: center; gap: 4px; padding: 5px 0; }
.vscroll svg { width: 10px; height: 8px; }
.track { flex: 1; width: 100%; display: flex; flex-direction: column; padding: 75px 1px 78px; }
.track span { flex: 1; background: #cdcdcd; }
.hscroll { display: flex; align-items: center; height: 18px; flex: none; background: #f0f0f0; border-top: 1px solid #fff; padding: 1px 21px 1px 4px; gap: 5px; }
.hscroll svg { width: 8px; height: 10px; }
.hscroll span { flex: 1; align-self: stretch; background: #cdcdcd; margin-right: 27px; }

/* Status bar */
.status { display: flex; height: 25px; flex: none; background: #f0f0f0; border-top: 1px solid #d7d7d7; color: #111; }
.slot { display: flex; align-items: center; gap: 5px; width: 156px; padding: 0 0 1px 4px; border-right: 1px solid #d0d0d0; }
.slot + .slot { padding-left: 5px; }
.zoom { display: flex; align-items: center; margin-left: auto; width: 200px; padding-left: 22px; gap: 7px; border-left: 1px solid #d0d0d0; }
.zoom button { width: 16px; height: 16px; flex: none; }
.zoom svg { display: block; width: 16px; height: 16px; }
.zoom input { appearance: none; width: 84px; height: 18px; margin: 0 3px; background: linear-gradient(#0000 7px, #d0d0d0 7px, #d0d0d0 8px, #e7eaea 8px, #e7eaea 10px, #d0d0d0 10px, #d0d0d0 11px, #0000 11px); }
.zoom input::-webkit-slider-thumb { appearance: none; width: 10px; height: 16px; background: #0078d7; clip-path: polygon(0 0, 100% 0, 100% 75%, 50% 100%, 0 75%); }

/* Taskbar */
.taskbar { display: flex; height: 40px; flex: none; gap: 1px; background: linear-gradient(90deg, #211a17, #2c241a 22%, #20201f 35%, #1b2023 55%, #1b1b1d); color: #fff; }
.taskbar > button { position: relative; width: 48px; display: grid; place-items: center; }
.taskbar > button svg { width: 24px; height: 24px; }
.taskbar .start { margin-right: 2px; }
.run::after { content: ""; position: absolute; left: 4px; right: 4px; bottom: 0; height: 2px; background: #76b9ed; }
.front { background: #4b4b4c; }
.front::after { left: 0; right: 0; }
.di { font: bold 20px "Liberation Serif", serif; fill: #ddd; }
.ps { font: bold 11px "Open Sans", sans-serif; fill: #a4dbff; }
.ucs { font: bold 7px "DejaVu Sans", sans-serif; fill: #111; }
.hs-text { font: bold 10px "Liberation Sans", sans-serif; fill: #111; }
.hd { font: bold 13px "DejaVu Sans", sans-serif; fill: #e21b22; }
.count { font: bold 11px "Open Sans", sans-serif; fill: #fff; }
.tray { display: flex; align-items: center; margin-left: auto; gap: 8px; padding-right: 4px; }
.two { text-align: center; line-height: 17px; }
.lang { width: 28px; }
.clock { width: 62px; }
.notes { height: 40px; padding: 5px 10px 0 9px; border-right: 1px solid #555; }
```
